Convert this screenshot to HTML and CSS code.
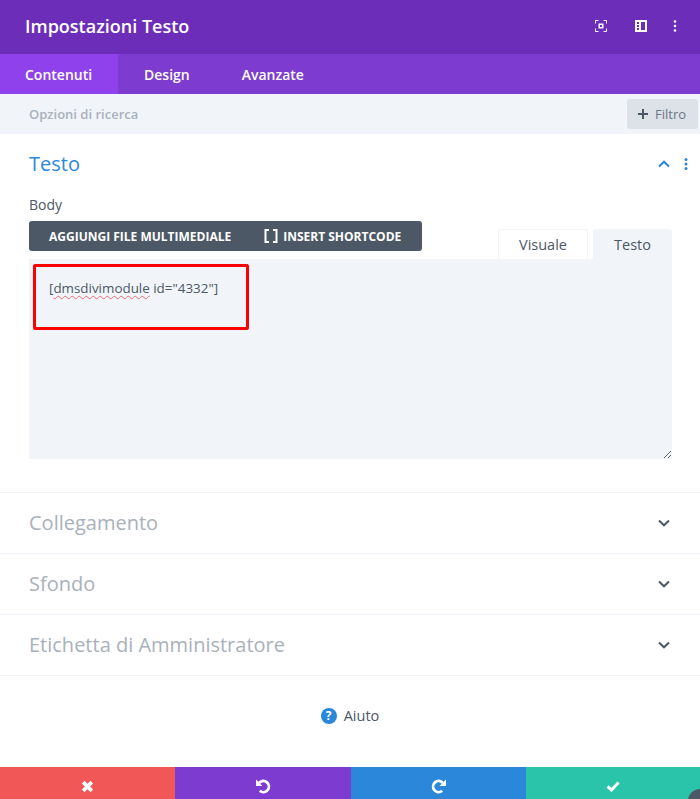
FILE: index.html
```html
<!DOCTYPE html>
<html lang="it">
<head>
<meta charset="utf-8">
<title>Impostazioni Testo</title>
<link rel="stylesheet" href="styles.css">
</head>
<body>
<div class="modal">
  <header class="head">
    <h1 class="title">Impostazioni Testo</h1>
    <div class="head-icons">
      <svg class="hicon" width="12" height="12" viewBox="0 0 12 12" fill="none" stroke="#fff" stroke-width="1"><path d="M.5 3.5v-3h3M8.500 .5h3v3M.5 8.500v3h3M11.500 8.500v3h-3"/><rect x="3.500" y="3.500" width="5" height="5" fill="#fff" stroke="none"/><rect x="5" y="5" width="2" height="2" fill="#6c2eb9" stroke="none"/></svg>
      <svg class="hicon" width="12" height="12" viewBox="0 0 12 12"><path fill="#fff" fill-rule="evenodd" d="M0 0h12v12H0zM6 2v8h4V2zM2 2v2h2V2zM2 5v2h2V5zM2 8v2h2V8z"/></svg>
      <svg class="hicon dots" width="4" height="12" viewBox="0 0 4 12"><g fill="#fff"><circle cx="2" cy="1.500" r="1.300"/><circle cx="2" cy="6" r="1.300"/><circle cx="2" cy="10.500" r="1.300"/></g></svg>
    </div>
  </header>
  <nav class="tabs">
    <a class="tab active">Contenuti</a>
    <a class="tab">Design</a>
    <a class="tab">Avanzate</a>
  </nav>
  <div class="search">
    <span class="search-label">Opzioni di ricerca</span>
    <button class="filter"><svg width="10" height="10" viewBox="0 0 10 10"><path d="M4 0h2v4h4v2H6v4H4V6H0V4h4z" fill="#4c5866"/></svg><span>Filtro</span></button>
  </div>

  <section class="group open">
    <div class="group-head">
      <h2 class="group-title blue">Testo</h2>
      <div class="group-tools">
        <svg width="12" height="8" viewBox="0 0 12 8" fill="none" stroke="#2b87da" stroke-width="2"><path d="M1 6.500l5-4.800 5 4.800"/></svg>
        <svg width="4" height="12" viewBox="0 0 4 12"><g fill="#2b87da"><circle cx="2" cy="1.500" r="1.500"/><circle cx="2" cy="6" r="1.500"/><circle cx="2" cy="10.500" r="1.500"/></g></svg>
      </div>
    </div>
    <label class="field-label">Body</label>
    <div class="editor-top">
      <div class="media-bar">
        <span class="media-btn">AGGIUNGI FILE MULTIMEDIALE</span>
        <span class="media-btn short"><svg width="14" height="14" viewBox="0 0 14 14" fill="none" stroke="#fff" stroke-width="2"><path d="M5 1H1.500v12H5M9 1h3.500v12H9"/></svg>INSERT SHORTCODE</span>
      </div>
      <div class="editor-tabs">
        <span class="etab">Visuale</span>
        <span class="etab current">Testo</span>
      </div>
    </div>
    <div class="editor"><span class="typo">[<u class="squiggle">dmsdivimodule</u> id="4332"]</span></div>
    <div class="highlight"></div>
  </section>

  <section class="group closed"><h2 class="group-title">Collegamento</h2><svg class="chev" width="12" height="8" viewBox="0 0 12 8" fill="none" stroke="#4c5866" stroke-width="2"><path d="M1 1.500l5 4.800 5-4.800"/></svg></section>
  <section class="group closed"><h2 class="group-title">Sfondo</h2><svg class="chev" width="12" height="8" viewBox="0 0 12 8" fill="none" stroke="#4c5866" stroke-width="2"><path d="M1 1.500l5 4.800 5-4.800"/></svg></section>
  <section class="group closed"><h2 class="group-title">Etichetta di Amministratore</h2><svg class="chev" width="12" height="8" viewBox="0 0 12 8" fill="none" stroke="#4c5866" stroke-width="2"><path d="M1 1.500l5 4.800 5-4.800"/></svg></section>

  <div class="help">
    <span class="help-icon">?</span><span>Aiuto</span>
  </div>

  <footer class="actions">
    <button class="act red"><svg width="13" height="13" viewBox="0 0 12 12" fill="none" stroke="#fff" stroke-width="3.400"><path d="M2 2l8 8M10 2l-8 8"/></svg></button>
    <button class="act purple"><svg width="16" height="16" viewBox="0 0 15 15" fill="none"><path d="M4 4.500A5.200 5.200 0 1 1 4.500 12" stroke="#fff" stroke-width="2.600"/><path d="M1 1.500v6h6z" fill="#fff"/></svg></button>
    <button class="act blue-bg"><svg width="16" height="16" viewBox="0 0 15 15" fill="none"><path d="M11 4.500A5.200 5.200 0 1 0 10.500 12" stroke="#fff" stroke-width="2.600"/><path d="M14 1.500v6H8z" fill="#fff"/></svg></button>
    <button class="act green"><svg width="14" height="11" viewBox="0 0 14 11" fill="none" stroke="#fff" stroke-width="3"><path d="M1.500 5.500l4 3.500 7-7.500"/></svg></button>
  </footer>
  <div class="corner"></div>
</div>
</body>
</html>
```

FILE: styles.css
```css
* { box-sizing: border-box; }
html, body { margin: 0; padding: 0; }
body { font-family: "Open Sans", "Liberation Sans", sans-serif; background: #fff; color: #4c5866; }
.modal { position: relative; width: 700px; height: 799px; overflow: hidden; display: flex; flex-direction: column; background: #fff; }

.head { height: 54px; flex: none; background: #6c2eb9; display: flex; align-items: center; justify-content: space-between; padding: 0 23px 0 25px; }
.title { margin: 0 0 2px; color: #fff; font-size: 18px; font-weight: 600; line-height: 1; }
.head-icons { display: flex; align-items: center; gap: 28px; }
.hicon { display: block; margin-bottom: 2px; }
.dots { margin-left: -2px; }

.tabs { height: 40px; flex: none; background: #7d3bcf; display: flex; }
.tab { display: flex; align-items: center; padding: 0 26px; color: #fff; font-size: 14px; font-weight: 600; }
.tab.active { background: #8f42ec; padding: 0 25px; width: 118px; }

.search { height: 40px; flex: none; background: #f1f5f9; display: flex; align-items: center; justify-content: space-between; padding: 0 2px 0 29px; }
.search-label { font-size: 13px; font-weight: 600; color: #a9b1bc; }
.filter { height: 30px; width: 71px; border: 0; border-radius: 3px; background: #dde1e8; color: #6b7684; display: flex; align-items: center; gap: 7px; padding: 0 0 0 11px; font: 500 13px "Open Sans", sans-serif; }

.group { border-bottom: 1px solid #f1f5f9; }
.group.open { position: relative; height: 359px; flex: none; padding: 0 28px 0 29px; }
.group-head { display: flex; align-items: center; justify-content: space-between; height: 60px; }
.group-title { margin: 0; font-size: 20px; font-weight: 400; line-height: 1; color: #a9b1bc; }
.group-title.blue { color: #2b87da; }
.group-tools { display: flex; align-items: center; gap: 14px; margin-right: -16px; }
.field-label { display: block; font-size: 14px; font-weight: 500; line-height: 20px; margin-top: 1px; color: #4c5866; }

.editor-top { display: flex; justify-content: space-between; align-items: flex-end; height: 38px; margin-top: 6px; }
.media-bar { align-self: flex-start; width: 393px; height: 30px; border-radius: 3px; background: #4c5866; display: flex; align-items: center; padding-left: 20px; color: #fff; font-size: 12px; font-weight: 700; }
.media-btn { white-space: nowrap; }
.media-btn.short { display: flex; align-items: center; gap: 5px; margin-left: 33px; }
.editor-tabs { display: flex; gap: 5px; height: 30px; }
.etab { display: flex; align-items: center; justify-content: center; height: 30px; font-size: 14.500px; font-weight: 400; }
.etab:first-child { width: 90px; border: 1px solid #f1f5f9; border-bottom: 0; border-radius: 3px 3px 0 0; }
.etab.current { width: 79px; background: #f1f5f9; border-radius: 3px 3px 0 0; }

.editor { height: 200px; background: #f1f5f9; padding: 20px; font-size: 13.400px; line-height: 18px; resize: vertical; overflow: auto; }
.squiggle { text-decoration: underline wavy #ee6a78 1px; text-underline-offset: 2px; }
.highlight { position: absolute; left: 33px; top: 130px; width: 216px; height: 66px; border: 3px solid #f00; border-radius: 2px; }

.group.closed { height: 61px; flex: none; display: flex; align-items: center; justify-content: space-between; padding: 0 30px 0 29px; }

.help { flex: 1; display: flex; align-items: center; justify-content: center; gap: 7px; font-size: 14.500px; padding-bottom: 12px; }
.help-icon { width: 16px; height: 16px; border-radius: 50%; background: #2b87da; color: #fff; font-size: 12px; font-weight: 700; line-height: 16px; text-align: center; }

.actions { height: 32px; flex: none; display: grid; grid-template-columns: 175px 176px 175px 174px; }
.act { border: 0; padding: 6px 0 0; display: flex; align-items: center; justify-content: center; }
.red { background: #f25757; }
.purple { background: #7e3bd0; }
.blue-bg { background: #2b87da; }
.green { background: #29c4a9; }
.corner { position: absolute; right: -12px; bottom: -14px; width: 24px; height: 24px; border-radius: 50%; background: #4c5866; }
```
